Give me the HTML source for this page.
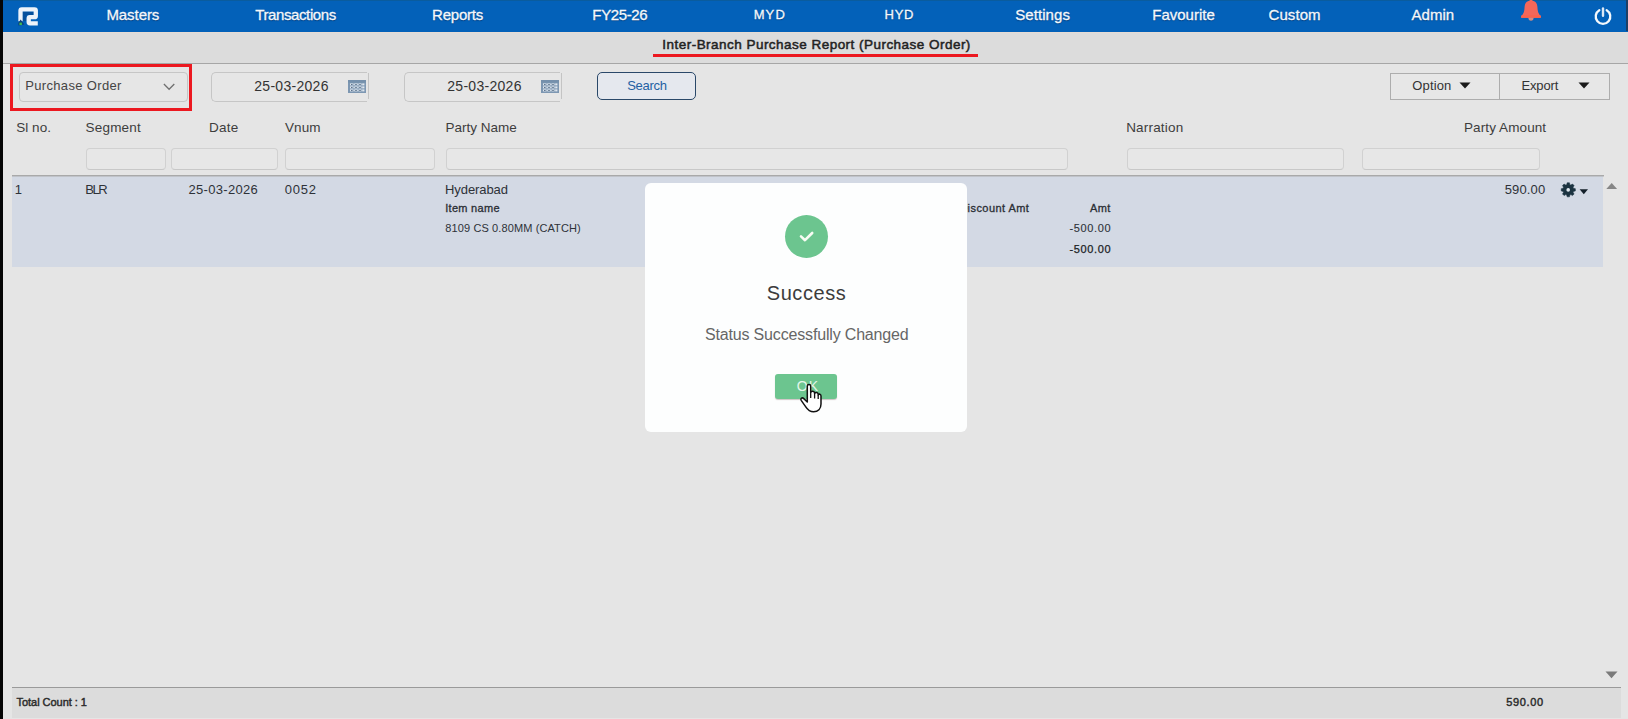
<!DOCTYPE html>
<html lang="en">
<head>
<meta charset="utf-8">
<title>Inter-Branch Purchase Report (Purchase Order)</title>
<style>
*{box-sizing:border-box;margin:0;padding:0}
html,body{width:1628px;height:719px;overflow:hidden}
body{position:relative;background:#e5e5e5;font-family:"Liberation Sans",sans-serif;color:#333;font-size:13px}
.abs{position:absolute;white-space:nowrap}
.t{position:absolute;white-space:nowrap;line-height:1;display:inline-block}
#leftstrip{left:0;top:0;width:3px;height:719px;background:#050505}
#nav{left:3px;top:0;width:1625px;height:32px;background:#0361b9;border-top:1px solid #0a5c9e}
#navr{left:1626px;top:0;width:2px;height:31px;background:#1d3f66}
.nv{color:#f4f8fc;font-size:15px;top:7px;letter-spacing:-0.35px;text-shadow:0 1px 1px rgba(8,36,84,.6);-webkit-text-stroke:.3px #f4f8fc}
#titlebar{left:3px;top:32px;width:1625px;height:32px;background:#dcdcdc;border-top:1px solid #e6dcd5;border-bottom:1px solid #a6a6a6}
#title{font-size:13.5px;font-weight:normal;-webkit-text-stroke:.5px #222;color:#222;top:37.5px;left:662px;letter-spacing:-0.2px}
#titleul{left:653px;top:54px;width:325px;height:3px;background:#ec1820}
#redbox{left:10px;top:64px;width:182px;height:47px;border:3px solid #ec1820}
.inp{border:1px solid #c6c6c6;border-radius:4px;background:#e6e6e6}
.hd{font-size:13.5px;color:#3d3d3d;top:120.5px;letter-spacing:-0.2px}
.fi{top:148px;height:22px;border:1px solid #d1d1d1;border-bottom-color:#c8c8c8;border-radius:4px;background:#e7e7e7}
#hline{left:12px;top:175px;width:1592px;height:1px;background:#a9a9a9;box-shadow:0 1px 0 rgba(169,169,169,.45)}
#row{left:12px;top:176px;width:1591px;height:91px;background:#d3d9e4}
.c{font-size:13px;color:#2e3238;top:183px;letter-spacing:-0.3px}
.s{font-size:11px;color:#2e3238;letter-spacing:-0.25px}
.sb{font-size:11px;color:#2a2e34;font-weight:normal;-webkit-text-stroke:.3px #2a2e34;letter-spacing:-0.35px}
#footer{left:12px;top:687px;width:1609px;height:31px;background:#dcdcdc;border-top:1px solid #9a9a9a}
.ft{font-size:11px;font-weight:normal;-webkit-text-stroke:.45px #2c2c2c;color:#2c2c2c;top:697px;letter-spacing:-0.3px}
#modal{left:645px;top:183px;width:322px;height:249px;background:#fdfefe;border-radius:6px}
#circle{left:785px;top:215px;width:43px;height:43px;border-radius:50%;background:#6cc58f}
#succ{font-size:20px;color:#3c3c3c;top:283px;left:767px;letter-spacing:-0.2px}
#msg{font-size:16px;color:#666;top:327px;left:704px;letter-spacing:-0.45px}
#okbtn{left:775px;top:374px;width:62px;height:25px;background:#6cc58f;border-radius:3px;box-shadow:0 1px 1px rgba(120,90,90,.35)}
#ok{font-size:14px;color:#e4f6ea;top:379px;left:796px;letter-spacing:-0.3px}
.btn{top:73px;height:27px;border:1px solid #adadad;background:#e7e7e7}
</style>
<style id="fit">
#n1{left:106.41px !important;letter-spacing:-0.07px !important}
#n2{left:255.17px !important;letter-spacing:-0.38px !important}
#n3{left:432.06px !important;letter-spacing:-0.22px !important}
#n4{left:592.35px !important;letter-spacing:-0.38px !important}
#n5{left:753.67px !important;letter-spacing:1.13px !important}
#n6{left:884.60px !important;letter-spacing:0.67px !important}
#n7{left:1015.28px !important;letter-spacing:0.06px !important}
#n8{left:1152.31px !important;letter-spacing:-0.01px !important}
#n9{left:1268.52px !important;letter-spacing:0.08px !important}
#n10{left:1411.57px !important;letter-spacing:0.00px !important}
#title{left:662.30px !important;letter-spacing:0.47px !important}
#selt{left:25.21px !important;letter-spacing:0.34px !important}
#d1t{left:254.26px !important;letter-spacing:0.29px !important}
#d2t{left:447.26px !important;letter-spacing:0.29px !important}
#searcht{left:627.13px !important;letter-spacing:-0.28px !important}
#optt{left:1412.34px !important;letter-spacing:0.12px !important}
#expt{left:1521.53px !important;letter-spacing:-0.16px !important}
#h1{left:16.18px !important;letter-spacing:0.06px !important}
#h2{left:85.59px !important;letter-spacing:0.18px !important}
#h3{left:209.11px !important;letter-spacing:0.23px !important}
#h4{left:285.03px !important;letter-spacing:0.07px !important}
#h5{left:445.55px !important;letter-spacing:0.00px !important}
#h6{left:1126.15px !important;letter-spacing:0.19px !important}
#h7{left:1463.98px !important;letter-spacing:0.10px !important}
#c1{left:14.85px !important;letter-spacing:0.00px !important}
#c2{left:85.29px !important;letter-spacing:-1.48px !important}
#c3{left:188.53px !important;letter-spacing:0.30px !important}
#c4{left:284.76px !important;letter-spacing:0.75px !important}
#c5{left:444.98px !important;letter-spacing:-0.07px !important}
#c6{left:445.22px !important;letter-spacing:0.29px !important}
#c7{left:445.37px !important;letter-spacing:0.11px !important}
#c8{left:959.17px !important;letter-spacing:0.45px !important}
#c9{left:1089.91px !important;letter-spacing:0.48px !important}
#c10{left:1069.49px !important;letter-spacing:0.63px !important}
#c11{left:1069.39px !important;letter-spacing:0.67px !important}
#c12{left:1504.74px !important;letter-spacing:0.13px !important}
#ft1{left:16.56px !important;letter-spacing:-0.04px !important}
#ft2{left:1506.19px !important;letter-spacing:0.65px !important}
#succ{left:766.81px !important;letter-spacing:0.55px !important}
#msg{left:704.99px !important;letter-spacing:-0.17px !important}
#ok{left:796.65px !important;letter-spacing:1.22px !important}
</style>
</head>
<body>
<div class="abs" id="nav"></div>
<div class="abs" id="navr"></div>
<div class="abs" id="leftstrip"></div>

<!-- logo -->
<svg class="abs" id="logo" style="left:0;top:0" width="60" height="32" viewBox="0 0 60 32">
  <path d="M22.4 11.6 L33.6 11.6 L33.6 15 L30.6 15 L26.6 15 L26.6 21 L22.4 21 Z" fill="#0a3f80" opacity=".5"/>
  <path d="M20.5 21.2 L20.5 10.6 Q20.5 9.3 21.8 9.3 L34.5 9.3 Q35.8 9.3 35.8 10.6 L35.8 15.9 Q35.8 17.2 34.5 17.2 L29.9 17.2 Q28.7 17.2 28.7 18.4 L28.7 22.1 Q28.7 23.4 30 23.4 L37.8 23.4" fill="none" stroke="#eef3f9" stroke-width="4.3" stroke-linejoin="round"/>
  <path d="M18.4 23 L20.6 19.6 L24.4 24.6 L18.4 25.4 Z" fill="#0b3f7a"/>
  <rect x="19.4" y="22.6" width="2.5" height="2.5" fill="#3fba4f"/>
</svg>

<span class="t nv" id="n1" style="left:107px">Masters</span>
<span class="t nv" id="n2" style="left:255px">Transactions</span>
<span class="t nv" id="n3" style="left:432px">Reports</span>
<span class="t nv" id="n4" style="left:593px">FY25-26</span>
<span class="t nv" id="n5" style="left:754px;top:8px;font-size:13px">MYD</span>
<span class="t nv" id="n6" style="left:885px;top:8px;font-size:13px">HYD</span>
<span class="t nv" id="n7" style="left:1016px">Settings</span>
<span class="t nv" id="n8" style="left:1153px">Favourite</span>
<span class="t nv" id="n9" style="left:1269px">Custom</span>
<span class="t nv" id="n10" style="left:1411px">Admin</span>

<!-- bell -->
<svg class="abs" id="bell" style="left:1519px;top:0" width="24" height="22" viewBox="0 0 24 22">
  <path d="M10.6 0 L13.4 0 L13.4 0.8 C16.8 1.2 18.2 3.8 18.4 6.8 C18.6 11.2 19.2 13.8 21.8 16.2 L21.8 17.8 L2.2 17.8 L2.2 16.2 C4.8 13.8 5.4 11.2 5.6 6.8 C5.8 3.8 7.2 1.2 10.6 0.8 Z" fill="#f3675a"/>
  <path d="M2.2 15.4 L21.8 15.4 L21.8 17.8 L2.2 17.8 Z" fill="#fb624c"/>
  <path d="M9.4 17.8 A2.6 3 0 0 0 14.6 17.8 Z" fill="#cf8c84"/>
</svg>
<!-- power -->
<svg class="abs" id="power" style="left:1593px;top:6px" width="20" height="20" viewBox="0 0 20 20">
  <path d="M6.3 4.2 A7.3 7.3 0 1 0 13.7 4.2" fill="none" stroke="#f4f8fc" stroke-width="2.3" stroke-linecap="round"/>
  <path d="M10 2.5 L10 9.8" stroke="#dbe8f6" stroke-width="2.4" stroke-linecap="round"/>
</svg>

<div class="abs" id="titlebar"></div>
<span class="t" id="title">Inter-Branch Purchase Report (Purchase Order)</span>
<div class="abs" id="titleul"></div>

<!-- filter bar -->
<div class="abs" id="redbox"></div>
<div class="abs inp" id="sel" style="left:19px;top:72px;width:169px;height:30px"></div>
<span class="t" id="selt" style="left:25px;top:79px;font-size:13px;color:#444;letter-spacing:0.07px">Purchase Order</span>
<svg class="abs" id="chev" style="left:162px;top:81px" width="14" height="11" viewBox="0 0 14 11"><path d="M1.9 3 L7.1 8.3 L12.3 3" fill="none" stroke="#707070" stroke-width="1.3"/></svg>

<div class="abs inp" id="d1" style="left:211px;top:72px;width:156px;height:30px;border-right:none;border-radius:5px 0 0 5px"></div>
<span class="t" id="d1t" style="left:254px;top:79px;font-size:14px;color:#333;letter-spacing:0.2px">25-03-2026</span>
<div class="abs inp" id="d2" style="left:404px;top:72px;width:156px;height:30px;border-right:none;border-radius:5px 0 0 5px"></div>
<span class="t" id="d2t" style="left:447px;top:79px;font-size:14px;color:#333;letter-spacing:0.2px">25-03-2026</span>

<svg class="abs" id="cal1" style="left:348px;top:80px" width="18" height="13" viewBox="0 0 18 13">
  <rect x="0" y="0" width="18" height="13" fill="#7d97b2"/>
  <rect x="0" y="0" width="18" height="2.6" fill="#7590ac"/>
  <g fill="#dfe6ee"><rect x="2" y="3.4" width="3.6" height="2"/><rect x="6.2" y="3.4" width="3.6" height="2"/><rect x="10.4" y="3.4" width="3.2" height="2"/><rect x="14.2" y="3.4" width="2.2" height="2"/>
  <rect x="2" y="6.4" width="3.6" height="2"/><rect x="6.2" y="6.4" width="3.6" height="2"/><rect x="10.4" y="6.4" width="3.2" height="2"/><rect x="14.2" y="6.4" width="2.2" height="2"/>
  <rect x="2" y="9.4" width="3.6" height="2"/><rect x="6.2" y="9.4" width="3.6" height="2"/><rect x="10.4" y="9.4" width="3.2" height="2"/><rect x="14.2" y="9.4" width="2.2" height="2"/></g>
  <g fill="#4d6680"><rect x="3" y="4" width="1.6" height="0.9"/><rect x="7.2" y="4" width="1.6" height="0.9"/><rect x="11.2" y="4" width="1.6" height="0.9"/><rect x="3" y="7" width="1.6" height="0.9"/><rect x="7.2" y="7" width="1.6" height="0.9"/><rect x="11.2" y="7" width="1.6" height="0.9"/><rect x="3" y="10" width="1.6" height="0.9"/><rect x="7.2" y="10" width="1.6" height="0.9"/><rect x="11.2" y="10" width="1.6" height="0.9"/></g>
</svg>
<svg class="abs" id="cal2" style="left:541px;top:80px" width="18" height="13" viewBox="0 0 18 13">
  <rect x="0" y="0" width="18" height="13" fill="#7d97b2"/>
  <rect x="0" y="0" width="18" height="2.6" fill="#7590ac"/>
  <g fill="#dfe6ee"><rect x="2" y="3.4" width="3.6" height="2"/><rect x="6.2" y="3.4" width="3.6" height="2"/><rect x="10.4" y="3.4" width="3.2" height="2"/><rect x="14.2" y="3.4" width="2.2" height="2"/>
  <rect x="2" y="6.4" width="3.6" height="2"/><rect x="6.2" y="6.4" width="3.6" height="2"/><rect x="10.4" y="6.4" width="3.2" height="2"/><rect x="14.2" y="6.4" width="2.2" height="2"/>
  <rect x="2" y="9.4" width="3.6" height="2"/><rect x="6.2" y="9.4" width="3.6" height="2"/><rect x="10.4" y="9.4" width="3.2" height="2"/><rect x="14.2" y="9.4" width="2.2" height="2"/></g>
  <g fill="#4d6680"><rect x="3" y="4" width="1.6" height="0.9"/><rect x="7.2" y="4" width="1.6" height="0.9"/><rect x="11.2" y="4" width="1.6" height="0.9"/><rect x="3" y="7" width="1.6" height="0.9"/><rect x="7.2" y="7" width="1.6" height="0.9"/><rect x="11.2" y="7" width="1.6" height="0.9"/><rect x="3" y="10" width="1.6" height="0.9"/><rect x="7.2" y="10" width="1.6" height="0.9"/><rect x="11.2" y="10" width="1.6" height="0.9"/></g>
</svg>
<div class="abs" id="d1r" style="left:368px;top:73px;width:1px;height:26px;background:#c4c4c4"></div>
<div class="abs" id="d2r" style="left:561px;top:73px;width:1px;height:26px;background:#c4c4c4"></div>
<div class="abs" id="search" style="left:597px;top:72px;width:99px;height:28px;border:1.5px solid #2a4869;border-radius:5px;background:#e5e8ee"></div>
<span class="t" id="searcht" style="left:627px;top:79px;font-size:13px;color:#2461a3;letter-spacing:-0.3px">Search</span>

<div class="abs btn" id="optb" style="left:1390px;width:110px"></div>
<div class="abs btn" id="expb" style="left:1499px;width:111px"></div>
<span class="t" id="optt" style="left:1412px;top:79px;font-size:13px;color:#333;letter-spacing:-0.3px">Option</span>
<span class="t" id="expt" style="left:1522px;top:79px;font-size:13px;color:#333;letter-spacing:-0.3px">Export</span>
<svg class="abs" id="car1" style="left:1459px;top:82px" width="12" height="7" viewBox="0 0 12 7"><path d="M0.5 0.5 L11.5 0.5 L6 6.5 Z" fill="#1b1b1b"/></svg>
<svg class="abs" id="car2" style="left:1578px;top:82px" width="12" height="7" viewBox="0 0 12 7"><path d="M0.5 0.5 L11.5 0.5 L6 6.5 Z" fill="#1b1b1b"/></svg>

<!-- header -->
<span class="t hd" id="h1" style="left:16px">Sl no.</span>
<span class="t hd" id="h2" style="left:86px">Segment</span>
<span class="t hd" id="h3" style="left:209px">Date</span>
<span class="t hd" id="h4" style="left:285px">Vnum</span>
<span class="t hd" id="h5" style="left:446px">Party Name</span>
<span class="t hd" id="h6" style="left:1126px">Narration</span>
<span class="t hd" id="h7" style="left:1464px">Party Amount</span>

<div class="abs fi" id="f1" style="left:86px;width:80px"></div>
<div class="abs fi" id="f2" style="left:171px;width:107px"></div>
<div class="abs fi" id="f3" style="left:285px;width:150px"></div>
<div class="abs fi" id="f4" style="left:446px;width:622px"></div>
<div class="abs fi" id="f5" style="left:1127px;width:217px"></div>
<div class="abs fi" id="f6" style="left:1362px;width:178px"></div>

<div class="abs" id="row"></div>
<div class="abs" id="hline"></div>

<span class="t c" id="c1" style="left:16px">1</span>
<span class="t c" id="c2" style="left:85px">BLR</span>
<span class="t c" id="c3" style="left:188px">25-03-2026</span>
<span class="t c" id="c4" style="left:284px">0052</span>
<span class="t c" id="c5" style="left:445px">Hyderabad</span>
<span class="t sb" id="c6" style="left:445px;top:203px">Item name</span>
<span class="t s" id="c7" style="left:445px;top:223px">8109 CS 0.80MM (CATCH)</span>
<span class="t sb" id="c8" style="left:950px;top:203px">Discount Amt</span>
<span class="t sb" id="c9" style="left:1089px;top:203px">Amt</span>
<span class="t s" id="c10" style="-webkit-text-stroke:.12px #2e3238;left:1069px;top:223px">-500.00</span>
<span class="t s" id="c11" style="-webkit-text-stroke:.25px #1c1f24;left:1069px;top:244px;color:#1c1f24">-500.00</span>
<span class="t c" id="c12" style="left:1504px">590.00</span>

<!-- gear -->
<svg class="abs" id="gear" style="left:1560px;top:181px" width="17" height="17" viewBox="-8.3 -8.8 17 17">
  <path d="M-1.60 -5.16 L-1.14 -7.06 L1.14 -7.06 L1.60 -5.16 L2.52 -4.78 L4.19 -5.80 L5.80 -4.19 L4.78 -2.52 L5.16 -1.60 L7.06 -1.14 L7.06 1.14 L5.16 1.60 L4.78 2.52 L5.80 4.19 L4.19 5.80 L2.52 4.78 L1.60 5.16 L1.14 7.06 L-1.14 7.06 L-1.60 5.16 L-2.52 4.78 L-4.19 5.80 L-5.80 4.19 L-4.78 2.52 L-5.16 1.60 L-7.06 1.14 L-7.06 -1.14 L-5.16 -1.60 L-4.78 -2.52 L-5.80 -4.19 L-4.19 -5.80 L-2.52 -4.78 Z" fill="#1b3340" stroke="#1b3340" stroke-width="0.5" stroke-linejoin="round"/>
  <circle cx="-0.1" cy="0.1" r="1.8" fill="#dfe8ee"/>
</svg>
<svg class="abs" id="car3" style="left:1579px;top:189px" width="10" height="6" viewBox="0 0 10 6"><path d="M0.6 0.3 L9 0.3 L4.8 5.3 Z" fill="#14202a"/></svg>

<!-- scrollbar arrows -->
<svg class="abs" id="up" style="left:1606px;top:183px" width="12" height="7" viewBox="0 0 12 7"><path d="M0.3 6.1 L5.7 0.1 L11.1 6.1 Z" fill="#868686"/></svg>
<svg class="abs" id="down" style="left:1605px;top:671px" width="13" height="8" viewBox="0 0 13 8"><path d="M0.5 0.5 L12.5 0.5 L6.5 7.2 Z" fill="#7a7a7a"/></svg>

<!-- footer -->
<div class="abs" id="footer"></div>
<span class="t ft" id="ft1" style="left:16px">Total Count : 1</span>
<span class="t ft" id="ft2" style="left:1506px">590.00</span>

<!-- modal -->
<div class="abs" id="modal"></div>
<div class="abs" id="circle"></div>
<svg class="abs" id="check" style="left:795px;top:226px" width="24" height="22" viewBox="795 226 24 22"><path d="M801 236.4 L805 240.2 L812.2 233" fill="none" stroke="#f8fcf4" stroke-width="2.6" stroke-linecap="round" stroke-linejoin="round"/></svg>
<span class="t" id="succ">Success</span>
<span class="t" id="msg">Status Successfully Changed</span>
<div class="abs" id="okbtn"></div>
<span class="t" id="ok">OK</span>

<!-- hand cursor -->
<svg class="abs" id="hand" style="left:799px;top:383px" width="25" height="31" viewBox="0 0 25 31">
  <path d="M8.3 3 C8.3 0.9 11.7 0.9 11.7 3 L11.7 9.4 C12.4 7.7 15.4 7.9 15.5 9.8 L15.6 10.4 C16.4 8.9 19 9.2 19.1 11 L19.2 11.9 C20 10.6 22 11 22 13 L22 21 C22 25.8 19 28.8 14.6 28.8 C10.8 28.8 8.8 27 6.6 23.6 L2.2 17.4 C1 15.6 3.2 14 4.8 15.6 L8.3 19 Z" fill="#fff" stroke="#111" stroke-width="1.5" stroke-linejoin="round"/>
  <path d="M11.7 9.4 L11.7 15 M15.6 10.4 L15.6 15.4 M19.2 11.9 L19.2 16" stroke="#111" stroke-width="1.3" fill="none"/>
</svg>
</body>
</html>
